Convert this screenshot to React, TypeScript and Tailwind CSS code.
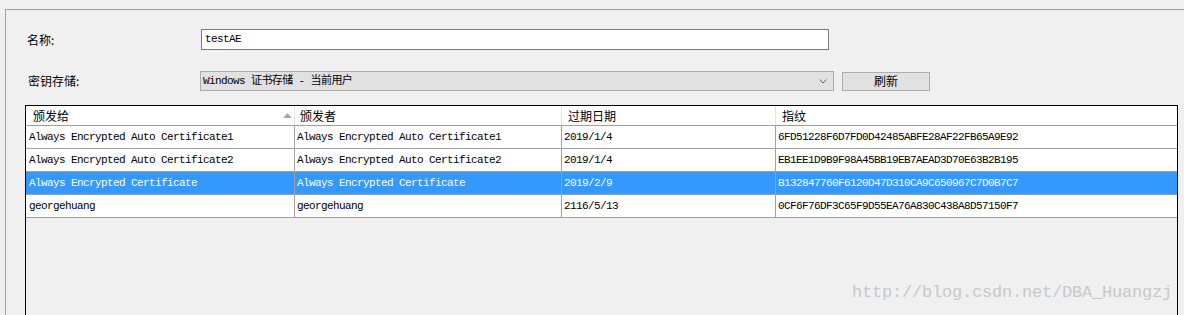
const mono = { fontFamily: '"Liberation Mono", "Noto Sans CJK SC", monospace' };

const rows = [
  {
    to: "Always Encrypted Auto Certificate1",
    by: "Always Encrypted Auto Certificate1",
    date: "2019/1/4",
    thumb: "6FD51228F6D7FD0D42485ABFE28AF22FB65A9E92",
  },
  {
    to: "Always Encrypted Auto Certificate2",
    by: "Always Encrypted Auto Certificate2",
    date: "2019/1/4",
    thumb: "EB1EE1D9B9F98A45BB19EB7AEAD3D70E63B2B195",
  },
  {
    to: "Always Encrypted Certificate",
    by: "Always Encrypted Certificate",
    date: "2019/2/9",
    thumb: "B132847760F6120D47D310CA9C650967C7D0B7C7",
    selected: true,
  },
  {
    to: "georgehuang",
    by: "georgehuang",
    date: "2116/5/13",
    thumb: "0CF6F76DF3C65F9D55EA76A830C438A8D57150F7",
  },
];

export default function App() {
  return (
    <div
      className="relative w-[1184px] h-[315px] overflow-hidden bg-[#f0f0f0] text-black"
      style={{ fontFamily: '"Noto Sans CJK SC", "Noto Sans", sans-serif' }}
    >
      <div className="ml-[5px] mt-[9px] h-[306px] border-l border-t border-[#a0a0a0] pt-[19px]">
        {/* 名称 */}
        <div className="flex h-[21px] items-center">
          <div className="w-[195px] pl-[21px] text-[12px] leading-none">名称:</div>
          <div
            className="flex h-[21px] w-[628px] items-center border border-[#7a7a7a] bg-white pl-[3px] text-[11px] tracking-[-0.6px]"
            style={mono}
          >
            testAE
          </div>
        </div>

        {/* 密钥存储 */}
        <div className="mt-[21px] flex h-[20px] items-center">
          <div className="w-[194px] pl-[22px] text-[12px] leading-none">密钥存储:</div>
          <div className="flex h-[20px] w-[634px] items-center justify-between border border-[#adadad] bg-[#e1e1e1] pl-[2px] pr-[6px]">
            <span className="text-[11px] tracking-[-0.6px]" style={mono}>
              Windows 证书存储 - 当前用户
            </span>
            <svg width="8" height="5" viewBox="0 0 8 5">
              <polyline points="0.5,0.5 4,4 7.5,0.5" fill="none" stroke="#606060" strokeWidth="1" />
            </svg>
          </div>
          <button className="ml-[8px] flex h-[19px] w-[88px] items-center justify-center border border-[#adadad] bg-[#e1e1e1] text-[12px] leading-none">
            刷新
          </button>
        </div>

        {/* 证书列表 */}
        <div className="ml-[19px] mt-[14px] h-[220px] w-[1153px] border border-black">
          <div className="grid h-[20px] grid-cols-[269px_267px_214px_1fr] border-b border-[#a0a0a0] bg-white text-[12px] leading-none">
            <div className="flex items-center justify-between border-r border-[#e5e5e5] pl-[7px] pr-[2px]">
              <span>颁发给</span>
              <svg width="9" height="5" viewBox="0 0 9 5">
                <polygon points="0,5 4.5,0 9,5" fill="#a8a8a8" />
              </svg>
            </div>
            <div className="flex items-center border-r border-[#e5e5e5] pl-[5px]">颁发者</div>
            <div className="flex items-center border-r border-[#e5e5e5] pl-[6px]">过期日期</div>
            <div className="flex items-center pl-[6px]">指纹</div>
          </div>
          {rows.map((r) => (
            <div
              key={r.thumb}
              className={`grid h-[23px] grid-cols-[269px_267px_214px_1fr] border-b border-[#a0a0a0] text-[11px] tracking-[-0.6px] ${
                r.selected ? "bg-[#3399ff] text-white" : "bg-white"
              }`}
              style={mono}
            >
              <div className="flex items-center border-r border-[#a0a0a0] pl-[3px]">{r.to}</div>
              <div className="flex items-center border-r border-[#a0a0a0] pl-[2px]">{r.by}</div>
              <div className="flex items-center border-r border-[#a0a0a0] pl-[2px]">{r.date}</div>
              <div className="flex items-center pl-[2px]">{r.thumb}</div>
            </div>
          ))}
        </div>
      </div>

      <div
        className="absolute left-[852px] top-[284px] text-[17px] leading-none tracking-[-0.2px] text-[#c8c8c8]"
        style={mono}
      >
        http://blog.csdn.net/DBA_Huangzj
      </div>
    </div>
  );
}
